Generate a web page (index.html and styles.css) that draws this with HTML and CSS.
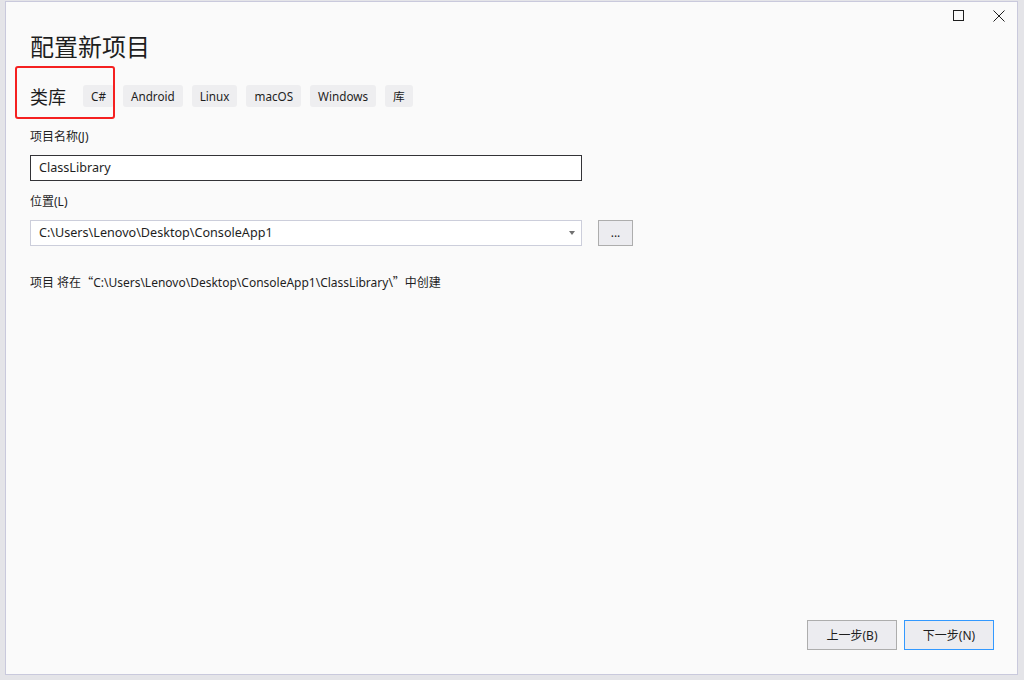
FILE: index.html
```html
<!DOCTYPE html>
<html lang="zh-CN">
<head>
<meta charset="utf-8">
<title>配置新项目</title>
<link rel="stylesheet" href="styles.css">
</head>
<body>
<div class="window">
  <div class="titlebar">
    <span class="ctl ctl-max" aria-label="最大化">
      <svg width="11" height="11" viewBox="0 0 11 11"><rect x="0.5" y="0.5" width="10" height="10" fill="none" stroke="#1e1e1e" stroke-width="1"/></svg>
    </span>
    <span class="ctl ctl-close" aria-label="关闭">
      <svg width="12" height="12" viewBox="0 0 12 12"><path d="M0.5 0.5 L11.5 11.5 M11.5 0.5 L0.5 11.5" stroke="#1e1e1e" stroke-width="1" fill="none"/></svg>
    </span>
  </div>
  <div class="content">
    <h1 class="title">配置新项目</h1>
    <div class="template-row">
      <span class="template-name">类库</span>
      <span class="tag">C#</span>
      <span class="tag">Android</span>
      <span class="tag">Linux</span>
      <span class="tag">macOS</span>
      <span class="tag">Windows</span>
      <span class="tag">库</span>
    </div>
    <label class="label label-name">项目名称(J)</label>
    <div class="input">ClassLibrary</div>
    <label class="label label-loc">位置(L)</label>
    <div class="loc-row">
      <div class="select">
        <span>C:\Users\Lenovo\Desktop\ConsoleApp1</span>
        <span class="arrow"></span>
      </div>
      <button class="browse">...</button>
    </div>
    <p class="info">项目 将在<span class="q">“</span>C:\Users\Lenovo\Desktop\ConsoleApp1\ClassLibrary\<span class="q">”</span>中创建</p>
    <div class="spacer"></div>
    <div class="footer">
      <button class="btn">上一步(B)</button>
      <button class="btn btn-primary">下一步(N)</button>
    </div>
  </div>
  <div class="highlight"></div>
</div>
</body>
</html>
```

FILE: styles.css
```css
html, body {
  margin: 0;
  padding: 0;
}
body {
  width: 1024px;
  height: 680px;
  background: #e4e4e8;
  font-family: "Segoe UI", "Noto Sans", "Noto Sans CJK SC", sans-serif;
  color: #1e1e1e;
  overflow: hidden;
}
.window {
  position: relative;
  box-sizing: border-box;
  margin: 1px 0 0 5px;
  width: 1013px;
  height: 674px;
  background: #fafafa;
  border: 1px solid #c9c9dc;
  display: flex;
  flex-direction: column;
}
.titlebar {
  height: 29px;
  display: flex;
  justify-content: flex-end;
  align-items: flex-start;
  padding-right: 12px;
  gap: 28px;
}
.ctl {
  display: block;
  margin-top: 8px;
  line-height: 0;
}
.ctl-max { margin-right: 1px; }
.content {
  flex: 1;
  display: flex;
  flex-direction: column;
  padding: 0 23px 24px 24px;
}
.title {
  margin: 0;
  font-size: 24px;
  line-height: 30px;
  font-weight: normal;
  font-family: "Noto Sans CJK SC", sans-serif;
  color: #1e1e1e;
}
.template-row {
  margin-top: 24px;
  display: flex;
  align-items: center;
  height: 22px;
}
.template-name {
  font-family: "Noto Sans CJK SC", sans-serif;
  font-size: 18px;
  line-height: 22px;
  margin-right: 17px;
}
.tag {
  height: 22px;
  line-height: 22px;
  padding: 0 8px;
  margin-right: 9px;
  background: #eeeef0;
  border-radius: 3px;
  font-size: 11.7px;
}
.label {
  display: block;
  font-size: 12px;
  line-height: 16px;
}
.label-name { margin-top: 22px; }
.label-loc { margin-top: 13px; }
.input {
  margin-top: 10px;
  box-sizing: border-box;
  width: 552px;
  height: 26px;
  border: 1px solid #333337;
  background: #ffffff;
  padding: 0 8px;
  font-size: 12.6px;
  line-height: 24px;
}
.loc-row {
  margin-top: 10px;
  display: flex;
  align-items: center;
  gap: 16px;
}
.select {
  box-sizing: border-box;
  width: 552px;
  height: 26px;
  border: 1px solid #cccedb;
  background: #ffffff;
  padding: 0 8px;
  font-size: 12.6px;
  line-height: 24px;
  display: flex;
  justify-content: space-between;
  align-items: center;
}
.arrow {
  width: 0;
  height: 0;
  border-left: 3.5px solid transparent;
  border-right: 3.5px solid transparent;
  border-top: 4px solid #717171;
  margin-right: -2px;
}
.browse {
  box-sizing: border-box;
  width: 35px;
  height: 26px;
  border: 1px solid #adadad;
  background: #ececf0;
  font-family: inherit;
  font-size: 12px;
  color: #1e1e1e;
  padding: 0;
  line-height: 20px;
}
.info {
  margin: 28px 0 0 0;
  font-size: 12px;
  line-height: 16px;
}
.q {
  font-family: "Noto Sans CJK SC", sans-serif;
}
.spacer { flex: 1; }
.footer {
  display: flex;
  justify-content: flex-end;
  gap: 7px;
}
.btn {
  box-sizing: border-box;
  width: 90px;
  height: 30px;
  border: 1px solid #adadad;
  background: #ececf0;
  font-family: inherit;
  font-size: 12px;
  color: #1e1e1e;
  padding: 0;
}
.btn-primary {
  border-color: #3399ff;
}
.highlight {
  position: absolute;
  left: 9px;
  top: 64px;
  width: 100px;
  height: 53px;
  box-sizing: border-box;
  border: 2px solid #f52020;
  border-radius: 3px;
}
```
